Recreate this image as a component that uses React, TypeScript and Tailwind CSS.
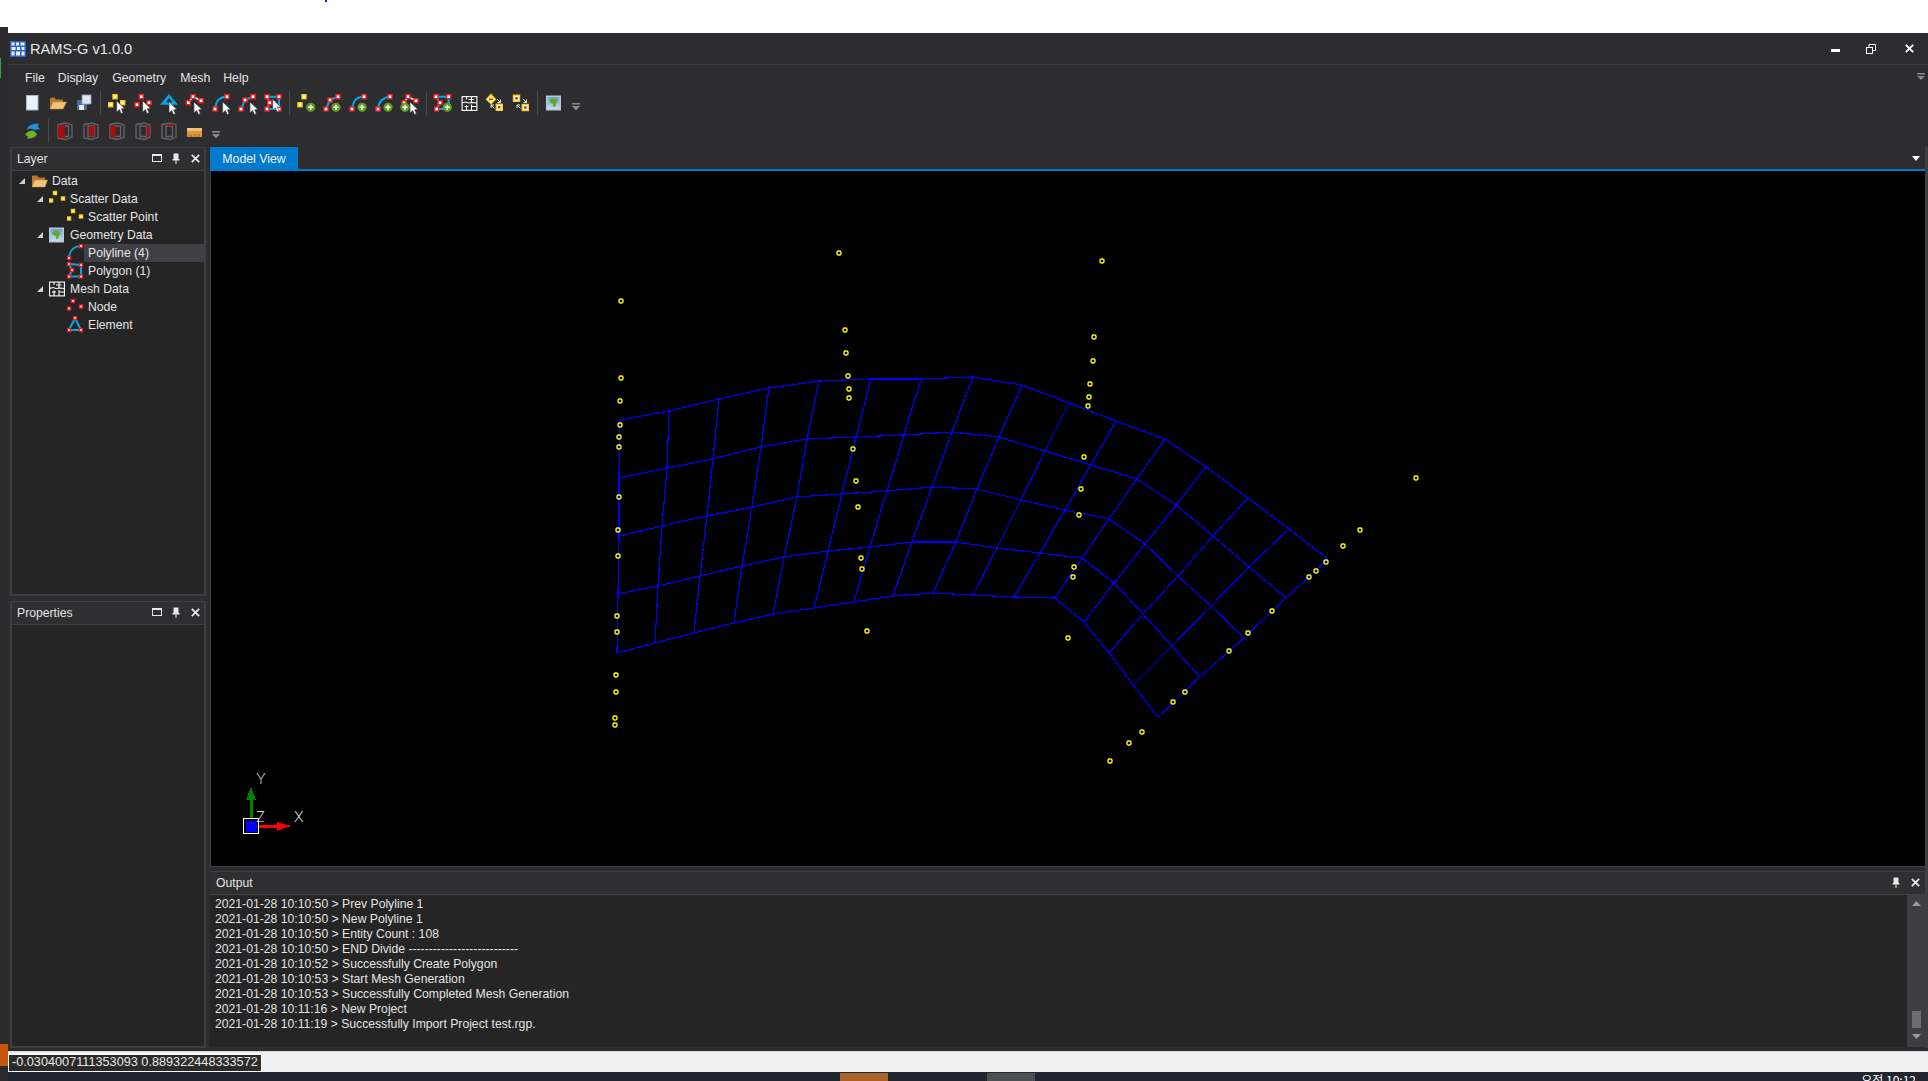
import type { ReactNode } from "react";

type P = [number, number];

// mesh rows, page coordinates, traced from the viewport
const MESH_ROWS: P[][] = [
  [[620,420],[669,411],[719,399],[769,388],[819,381],[871,379],[921,379],[973,377],[1022,385],[1069,403],[1116,421],[1165,439],[1206,467],[1248,498],[1289,529],[1328,559]],
  [[619,478],[667,468],[713,459],[761,447],[807,439],[856,437],[904,435],[952,432],[999,437],[1045,451],[1091,465],[1137,479],[1176,505],[1213,536],[1249,567],[1286,598]],
  [[619,536],[662,526],[707,516],[752,507],[797,497],[842,494],[887,491],[932,487],[977,489],[1021,500],[1065,510],[1109,519],[1145,544],[1178,576],[1211,606],[1244,638]],
  [[618,594],[658,586],[700,576],[742,566],[784,557],[828,551],[870,547],[912,542],[956,542],[997,548],[1040,553],[1082,558],[1114,583],[1143,614],[1172,646],[1200,677]],
  [[617,653],[655,643],[694,633],[734,623],[773,614],[814,608],[854,602],[893,596],[933,593],[973,595],[1014,597],[1055,598],[1084,622],[1109,653],[1133,685],[1158,717]],
];

const SCATTER: P[] = [
  [839,253],[1102,261],[621,301],[845,330],[1094,337],[846,353],[1093,361],[621,378],[620,401],[620,425],[619,437],[619,447],[619,497],[618,530],[618,556],[617,616],[617,632],[616,675],[616,692],[615,718],[615,725],
  [848,376],[849,389],[849,398],[853,449],[856,481],[858,507],[861,558],[862,569],[867,631],
  [1090,384],[1089,397],[1088,406],[1084,457],[1081,489],[1079,515],[1074,567],[1073,577],[1068,638],
  [1416,478],[1360,530],[1343,546],[1326,562],[1316,571],[1309,577],[1272,611],[1248,633],[1229,651],[1185,692],[1173,702],[1142,732],[1129,743],[1110,761],
];

const LOG = [
  "2021-01-28 10:10:50 > Prev Polyline 1",
  "2021-01-28 10:10:50 > New Polyline 1",
  "2021-01-28 10:10:50 > Entity Count : 108",
  "2021-01-28 10:10:50 > END Divide ---------------------------",
  "2021-01-28 10:10:52 > Successfully Create Polygon",
  "2021-01-28 10:10:53 > Start Mesh Generation",
  "2021-01-28 10:10:53 > Successfully Completed Mesh Generation",
  "2021-01-28 10:11:16 > New Project",
  "2021-01-28 10:11:19 > Successfully Import Project test.rgp.",
];

const BLUE = "#00a8e8";

const Sq = ({ x, y, yellow, s = 4 }: { x: number; y: number; yellow?: boolean; s?: number }) => (
  <rect
    x={x - s / 2}
    y={y - s / 2}
    width={s}
    height={s}
    fill={yellow ? "#fff6b0" : "#ffffff"}
    stroke={yellow ? "#f5d21f" : "#f01d25"}
    strokeWidth={1.4}
  />
);

const Cursor = ({ x, y }: { x: number; y: number }) => (
  <path
    transform={`translate(${x} ${y})`}
    d="M0 0 L0 11 L2.6 8.6 L4.6 12.6 L6.4 11.6 L4.6 7.8 L8 7.6 Z"
    fill="#ffffff"
    stroke="#3a3a3a"
    strokeWidth={0.6}
  />
);

const Plus = ({ x, y }: { x: number; y: number }) => (
  <g>
    <circle cx={x} cy={y} r={4.6} fill="#5c9e1c" />
    <path d={`M${x - 2.6} ${y}H${x + 2.6}M${x} ${y - 2.6}V${y + 2.6}`} stroke="#fff" strokeWidth={1.5} />
  </g>
);

const Line = ({ d, color = BLUE, w = 2 }: { d: string; color?: string; w?: number }) => (
  <path d={d} fill="none" stroke={color} strokeWidth={w} />
);

const Ic = ({ children, w = 26, h = 24 }: { children: ReactNode; w?: number; h?: number }) => (
  <svg width={w} height={h} viewBox={`0 0 ${w} ${h}`} className="block shrink-0">
    {children}
  </svg>
);

const MeshLines = () => (
  <g fill="none" stroke="#ffffff" strokeWidth={1.1}>
    <rect x={0.6} y={0.6} width={14.8} height={13.8} />
    <path d="M0.6 7 L4 6 L7 7 L11 6.5 L15.4 7 M5 0.6 V3.6 M5 9 V14.4 M10 0.6 V6.5 M10 8.5 V14.4 M7 3.5 H12.5 M3 10.5 H7 M10 10.5 H15" />
  </g>
);

const Dropdown = () => (
  <Ic w={14} h={24}>
    <rect x={3} y={12} width={8} height={1.6} fill="#8a8a8a" />
    <path d="M3 15 H11 L7 19.5 Z" fill="#8a8a8a" />
  </Ic>
);

const Sep = () => (
  <div className="flex h-[24px] w-[7px] shrink-0 justify-center">
    <div className="h-full w-px bg-[#4a4a4e]" />
  </div>
);

const MapIcon = () => (
  <g>
    <defs>
      <linearGradient id="sky" x1="0" y1="0" x2="0" y2="1">
        <stop offset="0" stopColor="#5a9bd0" />
        <stop offset="1" stopColor="#c8e4f2" />
      </linearGradient>
    </defs>
    <rect x={0.8} y={0.8} width={13.4} height={13.4} fill="url(#sky)" stroke="#b8c8d8" strokeWidth={1.6} />
    <path d="M3.5 5 L6 3 L10 3.6 L11.6 6 L10 8 L9 11.5 L7.4 11.5 L6.6 8 L4 7.4 Z" fill="#6aa626" />
  </g>
);

const SnapArrows = () => (
  <path
    d="M15 8 L18.5 11.5 M18.5 8.5 V11.5 H15.5 M12.5 17.5 L9 14 M9 17 V14 H12"
    fill="none"
    stroke="#e8e8e8"
    strokeWidth={1}
  />
);

const SnapSquare = ({ x, y }: { x: number; y: number }) => (
  <g>
    <rect x={x} y={y} width={6} height={6} fill="#ffffff" stroke="#f5d21f" strokeWidth={1.4} />
    <rect x={x + 1.8} y={y + 1.8} width={2.4} height={2.4} fill="#d01a22" />
  </g>
);

// crude wireframe box, red face drawn over it
const Box = ({ d }: { d: string }) => (
  <Ic>
    <path
      d="M6 5.5 L14 4 L20 6 L20 18 L14 20.5 L6 19 Z M10 7 L16.5 7 L16.5 17.5 L10 17.5 Z"
      fill="none"
      stroke="#66666a"
      strokeWidth={1.3}
    />
    <path d={d} fill="#a50f10" />
  </Ic>
);

const TOOLS_1: ReactNode[][] = [
  [
    <Ic key="new"><rect x={7.5} y={4.5} width={11.5} height={14.5} fill="#eef1fb" stroke="#a9b4d6" /></Ic>,
    <Ic key="open">
      <path d="M5 8 L5 18 L18 18 L18 8.5 L11 8.5 L9.5 6.5 L6 6.5 Z" fill="#b87a2c" />
      <path d="M5 18 L8 11 L21.5 11 L18 18 Z" fill="#f3c477" stroke="#c8873a" strokeWidth={0.6} />
    </Ic>,
    <Ic key="save">
      <rect x={6} y={9} width={10} height={10} fill="#56688f" />
      <rect x={8} y={14} width={5} height={5} fill="#e8e8f0" />
      <rect x={11} y={4} width={9} height={9} fill="#dfe6f2" stroke="#8fa0c0" strokeWidth={0.8} />
    </Ic>,
  ],
  [
    <Ic key="a"><Sq x={11} y={5.7} yellow /><Sq x={6.7} y={13.7} yellow /><Sq x={18.7} y={11.7} yellow /><Cursor x={12.7} y={10} /></Ic>,
    <Ic key="b"><Sq x={11.3} y={5.7} /><Sq x={7} y={13.7} /><Sq x={19} y={11.7} /><Cursor x={12.7} y={10} /></Ic>,
    <Ic key="c"><Line d="M13 5 L6.8 12.5 H19.2 Z" w={2.6} /><Cursor x={13} y={11} /></Ic>,
    <Ic key="d"><Line d="M6.3 11.7 L11 5.7 L19 9.7" color="#d8d8d8" /><Sq x={6.3} y={11.7} /><Sq x={11} y={5.7} /><Sq x={19} y={9.7} /><Cursor x={12} y={11} /></Ic>,
    <Ic key="e"><Line d="M7 18 C8 11 10 6 19 5.7" /><Sq x={7} y={18} /><Sq x={19} y={5.7} /><Cursor x={14.7} y={11} /></Ic>,
    <Ic key="f"><Line d="M7 18 L11 9 L19 5.7" /><Sq x={7} y={18} /><Sq x={11} y={9} /><Sq x={19} y={5.7} /><Cursor x={16} y={11} /></Ic>,
    <Ic key="g"><Line d="M7 5.7 H19 V18 H7 L9.7 11.7 Z" /><Sq x={7} y={5.7} /><Sq x={19} y={5.7} /><Sq x={19} y={18} /><Sq x={7} y={18} /><Sq x={9.7} y={11.7} /><Cursor x={12.7} y={8.3} /></Ic>,
  ],
  [
    <Ic key="a"><Sq x={11} y={5.7} yellow /><Sq x={7} y={13.7} yellow /><Plus x={17.7} y={16.3} /></Ic>,
    <Ic key="b"><Line d="M7 18 L11 9 L19 5.7" /><Sq x={7} y={18} /><Sq x={11} y={9} /><Sq x={19} y={5.7} /><Plus x={17} y={16.3} /></Ic>,
    <Ic key="c"><Line d="M7 18 C8 11 10 6 19 5.7" /><Sq x={7} y={18} /><Sq x={19} y={5.7} /><Plus x={17} y={16.3} /></Ic>,
    <Ic key="d"><Line d="M7 18 C7.5 11 11 6.5 19 5.7" /><Sq x={7} y={18} /><Sq x={19} y={5.7} /><Plus x={17} y={16.3} /></Ic>,
    <Ic key="e"><Line d="M7 11.7 L11 5.7 L19 9.7" color="#d8d8d8" /><Sq x={7} y={11.7} /><Sq x={11} y={5.7} /><Sq x={19} y={9.7} /><Cursor x={13} y={11} /><Plus x={8} y={16.3} /></Ic>,
  ],
  [
    <Ic key="a"><Line d="M6 5.7 H18.7 V18 H6.7 L10 11.7 Z" /><Sq x={6} y={5.7} /><Sq x={18.7} y={5.7} /><Sq x={6.7} y={18} /><Sq x={10} y={11.7} /><Plus x={17.3} y={16.3} /></Ic>,
    <Ic key="b"><g transform="translate(5.5 5)"><MeshLines /></g></Ic>,
    <Ic key="c">
      <path d="M9 3.5 L13.5 8.3 L9 13 L4.5 8.3 Z" fill="#fff6a0" stroke="#f5d21f" strokeWidth={1.2} />
      <path d="M7 8.3 H11" stroke="#d9262c" strokeWidth={1.6} />
      <SnapSquare x={14.3} y={13.3} />
      <SnapArrows />
    </Ic>,
    <Ic key="d">
      <SnapSquare x={5.5} y={4.3} />
      <SnapSquare x={14.3} y={13.5} />
      <SnapArrows />
    </Ic>,
  ],
  [<Ic key="map"><g transform="translate(5 4.5)"><MapIcon /></g></Ic>],
];

const Toolbar = ({ groups, last }: { groups: ReactNode[][]; last: ReactNode }) => (
  <div className="flex h-[24px] items-center pl-[11px]">
    {groups.map((group, i) => (
      <div key={i} className="flex items-center">
        {i > 0 && <Sep />}
        {group}
      </div>
    ))}
    {last}
  </div>
);

const TOOLS_2: ReactNode[][] = [
  [
    <Ic key="refresh">
      <path d="M8 11 C9 6 14 4 20 5 L19 8 L21 10 L15 11 C13 9 11 9 8 11 Z" fill="#1f8fe0" />
      <path d="M6 16 C8 12 12 11 15 12 L18 15 C16 19 11 20 8 19.5 L9 17 Z" fill="#6db52b" />
    </Ic>,
  ],
  [
    <Box key="1" d="M6 6 L13 6 L13 19 L6 18.5 Z" />,
    <Box key="2" d="M11 7 L16.5 7 L16.5 17.5 L11 17.5 Z" />,
    <Box key="3" d="M6.5 6 L12 7 L12 17.5 L6.5 18.5 Z" />,
    <Box key="4" d="M16.5 7 L19.5 6 L19.5 18 L16.5 17.5 Z" />,
    <Box key="5" d="M10 7 L14 4.5 L19.5 6 L16.5 7 Z" />,
    <Ic key="ruler">
      <rect x={5} y={9} width={15} height={9} fill="#e09a3c" />
      <rect x={5} y={9} width={15} height={3} fill="#f0c070" />
      <path d="M7 18V15M9.5 18V16M12 18V15M14.5 18V16M17 18V15" stroke="#8a5a1a" strokeWidth={0.8} />
    </Ic>,
  ],
];

const DockButtons = ({ max = true }: { max?: boolean }) => (
  <div className="mb-[2px] flex items-center">
    {max && (
      <svg width={10} height={8} viewBox="0 0 10 8" className="mr-[10px] block">
        <rect x={0.5} y={0.5} width={9} height={7} fill="none" stroke="#e8e8e8" />
        <rect x={0} y={0} width={10} height={2} fill="#e8e8e8" />
      </svg>
    )}
    <svg width={8} height={11} viewBox="0 0 8 11" className="mr-[11px] block">
      <path d="M1.5 0.5 H6.5 V6 H7.5 V7.5 H4.5 V11 H3.5 V7.5 H0.5 V6 H1.5 Z" fill="#e8e8e8" />
    </svg>
    <svg width={9} height={9} viewBox="0 0 9 9" className="block">
      <path d="M0.8 0.8 L8.2 8.2 M8.2 0.8 L0.8 8.2" stroke="#e8e8e8" strokeWidth={1.8} />
    </svg>
  </div>
);

const PanelHeader = ({ title, max }: { title: string; max?: boolean }) => (
  <div
    className={`flex h-[23px] shrink-0 items-center justify-between border-b border-[#414143] bg-[#2f2f31] text-[#e4e4e4] ${
      max ? "pl-[5px] pr-[4px]" : "pl-[6px] pr-[5px]"
    }`}
  >
    <span>{title}</span>
    <DockButtons max={max} />
  </div>
);

const Arrow = () => (
  <svg width={6} height={6} viewBox="0 0 6 6" className="block">
    <path d="M6 0 V6 H0 Z" fill="#d0d0d0" />
  </svg>
);

const Dots = ({ yellow }: { yellow?: boolean }) => (
  <Ic w={17} h={18}>
    <Sq x={6} y={3} yellow={yellow} s={3} />
    <Sq x={2} y={10.5} yellow={yellow} s={3} />
    <Sq x={14} y={8.5} yellow={yellow} s={3} />
  </Ic>
);

const TREE: { label: string; icon: ReactNode; pad: string; open?: boolean; selected?: boolean }[] = [
  {
    label: "Data",
    pad: "pl-[7px]",
    open: true,
    icon: (
      <Ic w={17} h={18}>
        <path d="M1 4 L1 15 L14 15 L14 5.5 L7.5 5.5 L6 3.5 L2 3.5 Z" fill="#b87a2c" />
        <path d="M1 15 L4 8 L16.5 8 L14 15 Z" fill="#f3c477" stroke="#c8873a" strokeWidth={0.5} />
      </Ic>
    ),
  },
  { label: "Scatter Data", pad: "pl-[25px]", open: true, icon: <Dots yellow /> },
  { label: "Scatter Point", pad: "pl-[55px]", icon: <Dots yellow /> },
  {
    label: "Geometry Data",
    pad: "pl-[25px]",
    open: true,
    icon: (
      <Ic w={17} h={18}>
        <g transform="translate(0 1.5)"><MapIcon /></g>
      </Ic>
    ),
  },
  {
    label: "Polyline (4)",
    pad: "pl-[55px]",
    selected: true,
    icon: (
      <Ic w={17} h={18}>
        <Line d="M2 14 C2.5 7 5 2.5 14 2" />
        <Sq x={2} y={14} s={3} />
        <Sq x={14} y={2} s={3} />
      </Ic>
    ),
  },
  {
    label: "Polygon (1)",
    pad: "pl-[55px]",
    icon: (
      <Ic w={17} h={18}>
        <Line d="M2 2 L14 3 L14 14.5 H2 L5 8 Z" />
        <Sq x={2} y={2} s={3} />
        <Sq x={14} y={3} s={3} />
        <Sq x={14} y={14.5} s={3} />
        <Sq x={2} y={14.5} s={3} />
        <Sq x={5} y={8} s={3} />
      </Ic>
    ),
  },
  {
    label: "Mesh Data",
    pad: "pl-[25px]",
    open: true,
    icon: (
      <Ic w={17} h={18}>
        <g transform="translate(0 1.5)"><MeshLines /></g>
      </Ic>
    ),
  },
  { label: "Node", pad: "pl-[55px]", icon: <Dots /> },
  {
    label: "Element",
    pad: "pl-[55px]",
    icon: (
      <Ic w={17} h={18}>
        <Line d="M8 2 L2 14 H14 Z" />
        <Sq x={8} y={2} s={3} />
        <Sq x={2} y={14} s={3} />
        <Sq x={14} y={14} s={3} />
      </Ic>
    ),
  },
];

const Viewport = () => {
  const cols = MESH_ROWS[0].map((_, i) => MESH_ROWS.map((r) => r[i]));
  const pts = (line: P[]) => line.map((p) => p.join(",")).join(" ");
  return (
    <svg viewBox="211 171 1714 695" className="block h-[695px] w-[1714px] bg-black">
      <g fill="none" stroke="#0000ff" strokeWidth={1.2} shapeRendering="crispEdges">
        {MESH_ROWS.map((r, i) => (
          <polyline key={i} points={pts(r)} />
        ))}
        {cols.map((c, i) => (
          <polyline key={i} points={pts(c)} />
        ))}
      </g>
      <g fill="none" stroke="#ffff00" strokeWidth={1.4}>
        {SCATTER.map(([x, y], i) => (
          <rect key={i} x={x - 2} y={y - 2} width={4} height={4} rx={1.4} />
        ))}
      </g>
      {/* axis widget */}
      <g shapeRendering="crispEdges">
        <rect x={250} y={799} width={2.5} height={20} fill="#008000" />
        <path d="M251 787 L256 800 H246 Z" fill="#008000" />
        <rect x={259} y={825} width={19} height={2.5} fill="#ff0000" />
        <path d="M277 822 L287 825 L292 826 L287 827 L277 831 Z" fill="#ff0000" />
        <rect x={243.5} y={818.5} width={15} height={15} fill="none" stroke="#ffffff" />
        <rect x={246} y={821} width={11} height={11} fill="#0000ff" />
      </g>
      <g fill="#ffffff" fontFamily="Inter, 'Liberation Sans', sans-serif" fontWeight={200} fontSize={15}>
        <text x={256} y={784}>Y</text>
        <text x={256} y={822}>Z</text>
        <text x={294} y={822}>X</text>
      </g>
    </svg>
  );
};

const App = () => (
  <div className="relative flex h-[1081px] w-[1928px] flex-col overflow-hidden bg-white font-['Liberation_Sans',sans-serif] text-[12.2px] text-[#e4e4e4]">
    {/* desktop strip showing at the window's left edge */}
    <div className="absolute left-0 top-[27px] h-[1054px] w-[8px] bg-[#2a2a2c]">
      <div className="absolute left-0 top-[31px] h-[20px] w-px bg-[#3d9a3d]" />
      <div className="absolute left-0 top-[1017px] h-[22px] w-[8px] bg-[#c8560c]" />
    </div>
    <div className="absolute left-[325px] top-0 h-[2px] w-[2px] bg-[#2020c0]" />

    <div className="h-[33px] shrink-0" />

    <div className="ml-[8px] flex h-[1039px] flex-col bg-[#2d2d30]">
      {/* title bar */}
      <div className="flex h-[32px] shrink-0 items-center border-b border-[#3f3f41] pl-[2px]">
        <svg width={16} height={16} viewBox="0 0 16 16" className="mr-[4px] block">
          <rect width={16} height={16} fill="#2f62c8" />
          <path d="M1.5 1.5h3v3h-3zM6 1.5h3v3H6zM10.5 1.5h4v3h-4zM1.5 6h4v3h-4zM7 6h3v3H7zM11.5 6h3v3h-3zM1.5 10.5h3v4h-3zM6 10.5h4v4H6zM11.5 10.5h3v4h-3z" fill="#e8eefc" />
        </svg>
        <span className="mt-[2px] text-[14.6px] text-[#e6e6e6]">RAMS-G v1.0.0</span>
        <div className="ml-auto flex items-center">
          <div className="mr-[26px] mt-[3px] h-[3px] w-[9px] bg-white" />
          <svg width={10} height={10} viewBox="0 0 10 10" className="mr-[29px] block">
            <path d="M3 3 V0.5 H9.5 V6.5 H7" fill="none" stroke="#fff" />
            <rect x={0.5} y={3.5} width={6} height={6} fill="none" stroke="#fff" />
          </svg>
          <svg width={9} height={9} viewBox="0 0 9 9" className="mr-[14px] block">
            <path d="M0.8 0.8 L8.2 8.2 M8.2 0.8 L0.8 8.2" stroke="#fff" strokeWidth={1.8} />
          </svg>
        </div>
      </div>

      {/* menu */}
      <div className="flex h-[26px] shrink-0 items-center pl-[17px] text-[12.3px] text-[#e4e4e4]">
        <span className="mr-[13px]">File</span>
        <span className="mr-[14px]">Display</span>
        <span className="mr-[14px]">Geometry</span>
        <span className="mr-[13px]">Mesh</span>
        <span>Help</span>
        <svg width={8} height={7} viewBox="0 0 8 7" className="ml-auto mr-[3px] mb-[3px] block">
          <rect width={8} height={1.5} fill="#8a8a8a" />
          <path d="M0 3 H8 L4 7 Z" fill="#8a8a8a" />
        </svg>
      </div>

      <Toolbar groups={TOOLS_1} last={<div className="ml-[2px]"><Dropdown /></div>} />
      <div className="mt-[4px]">
        <Toolbar groups={TOOLS_2} last={<div className="ml-[1px]"><Dropdown /></div>} />
      </div>

      {/* dock area */}
      <div className="mt-[4px] flex h-[901px] shrink-0 pl-[2px]">
        <div className="mr-[4px] flex w-[196px] shrink-0 flex-col gap-[5px]">
          <div className="flex h-[449px] flex-col border-[2px] border-t-[1px] border-[#3f3f41]">
            <PanelHeader title="Layer" max />
            <div className="flex-1 bg-[#252526] pt-px">
              {TREE.map((row) => (
                <div key={row.label} className={`flex h-[18px] items-center ${row.pad}`}>
                  {row.open && (
                    <div className="w-[12px] shrink-0">
                      <Arrow />
                    </div>
                  )}
                  {row.icon}
                  <div className={`flex h-full flex-1 items-center pl-[4px] ${row.selected ? "bg-[#3f3f46]" : ""}`}>
                    {row.label}
                  </div>
                </div>
              ))}
            </div>
          </div>
          <div className="flex h-[447px] flex-col border-[2px] border-t-[1px] border-[#3f3f41]">
            <PanelHeader title="Properties" max />
            <div className="flex-1 bg-[#252526]" />
          </div>
        </div>

        <div className="flex flex-1 flex-col border-r-[3px] border-[#3f3f41]">
          <div className="flex h-[22px] shrink-0 items-center">
            <div className="flex h-full w-[88px] items-center justify-center bg-[#007acc] pt-[2px] text-[12.3px] text-[#f0f0f0]">
              Model View
            </div>
            <svg width={8} height={5} viewBox="0 0 8 5" className="ml-auto mr-[5px] block">
              <path d="M0 0 H8 L4 5 Z" fill="#fff" />
            </svg>
          </div>
          <div className="h-[2px] shrink-0 bg-[#007acc]" />
          <div className="border-l border-[#3f3f41]">
            <Viewport />
          </div>
          <div className="h-[5px] shrink-0 border-t border-[#3f3f41]" />
          <div className="flex h-[176px] flex-col border-t border-[#3f3f41]">
            <PanelHeader title="Output" max={false} />
            <div className="flex flex-1">
              <div className="flex-1 bg-[#252526] pl-[5px] pt-[2px]">
                {LOG.map((line, i) => (
                  <div key={i} className="h-[15px] whitespace-pre leading-[15px]">
                    {line}
                  </div>
                ))}
              </div>
              <div className="flex w-[18px] flex-col items-center bg-[#3e3e42] pt-[6px]">
                <svg width={9} height={5} viewBox="0 0 9 5" className="block">
                  <path d="M0 5 H9 L4.5 0 Z" fill="#999999" />
                </svg>
                <div className="mt-[105px] h-[17px] w-[9px] bg-[#6d6d6d]" />
                <svg width={9} height={5} viewBox="0 0 9 5" className="mt-[6px] block">
                  <path d="M0 0 H9 L4.5 5 Z" fill="#999999" />
                </svg>
              </div>
            </div>
          </div>
        </div>
      </div>

      {/* status */}
      <div className="mt-[3px] flex h-[21px] shrink-0 items-start border-t border-[#d8d8d8] bg-[#f0f0f0] pt-[2px]">
        <div className="flex h-[18px] w-[254px] items-center whitespace-nowrap border border-white bg-[#2b2b2b] pl-[3px] text-[12.7px] text-[#e8e8e8]">
          -0.0304007111353093 0.889322448333572
        </div>
      </div>
    </div>

    {/* taskbar, cut off by the screenshot */}
    <div className="flex h-[9px] shrink-0 bg-[#1f2630] pt-px">
      <div className="ml-[840px] w-[48px] bg-[#a9632a]" />
      <div className="ml-[99px] w-[48px] bg-[#4c5055]" />
      <div className="ml-auto mr-[12px] font-['Noto_Sans_CJK_KR',sans-serif] text-[12px] leading-[14px] text-white">
        오전 10:12
      </div>
    </div>
  </div>
);

export default App;
